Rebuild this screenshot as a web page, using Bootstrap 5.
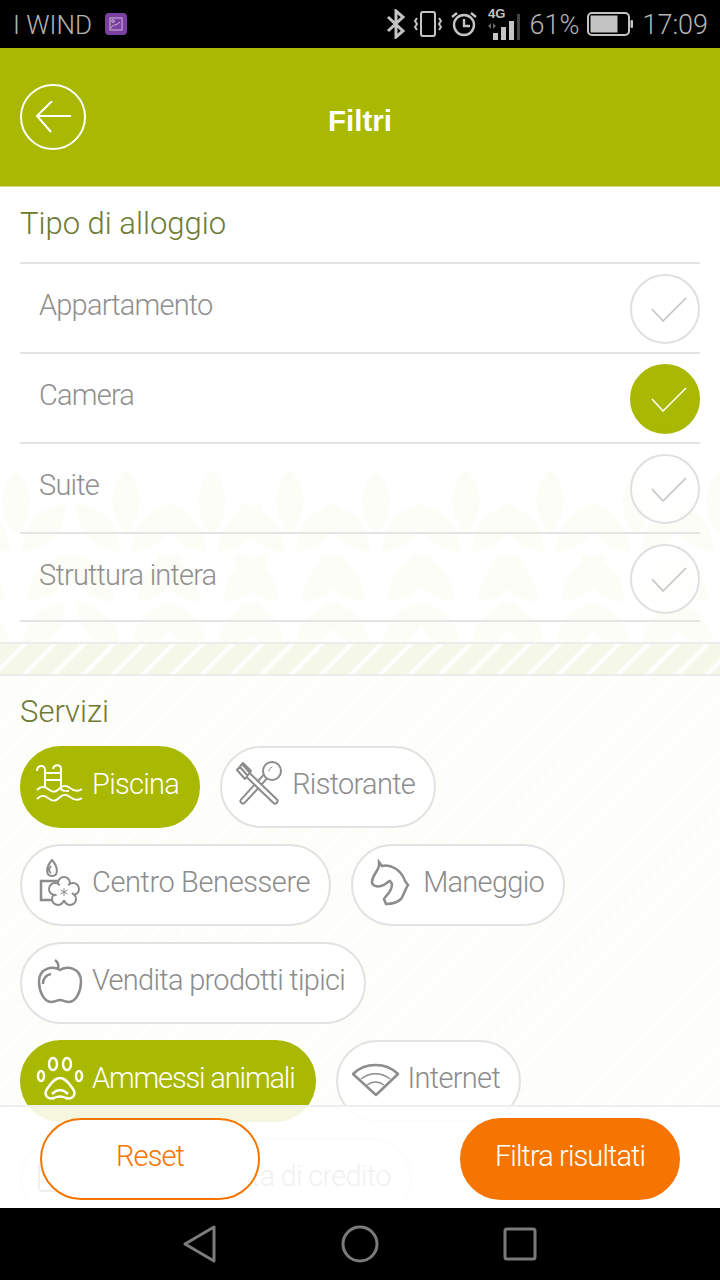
<!DOCTYPE html>
<html lang="it">
<head>
<meta charset="UTF-8">
<meta name="viewport" content="width=device-width, initial-scale=1.0">
<title>Filtri</title>
<link href="https://cdn.jsdelivr.net/npm/bootstrap@5.3.0/dist/css/bootstrap.min.css" rel="stylesheet">
<style>
body { background: #000; font-family: "Roboto", "Liberation Sans", sans-serif; font-weight: 300; }
.phone { width: 720px; height: 1280px; overflow: hidden; }
.status-bar { height: 48px; background: #000; color: #b4b4b4; font-size: 27px; padding: 0 12px 0 13px; flex: none; }
.status-bar span { line-height: 48px; padding-top: 2px; }
.status-bar .carrier { font-size: 26px; }
.app-head { height: 139px; background: #a9b800; border-bottom: 1px solid #d5db80; flex: none; padding: 36px 20px 0 20px; align-items: flex-start; }
.back-round { width: 66px; height: 66px; border: 2px solid #fff; border-radius: 50%; }
.app-title { font-family: "Liberation Sans", sans-serif; font-weight: 700; font-size: 29.500px; color: #fff; line-height: 1; top: 58px; }
.content-area { flex: 1 1 auto; min-height: 0; overflow: hidden; background: #fff; }
.wheat-bg { left: 0; top: 285px; width: 720px; height: 170px; z-index: 0; }
.type-box { height: 455px; flex: none; z-index: 1; padding: 0 20px; }
.sec-title { color: #6e7a34; font-size: 31px; line-height: 36px; margin: 0; }
.type-box .sec-title { padding: 19px 0 20px; }
.list-group-item.type-row { height: 90px; border: 0; border-top: 2px solid #e4e4e4; border-radius: 0; background: transparent; padding: 0 0 0 19px; color: #8f8f8f; font-size: 29px; letter-spacing: -.8px; }
.list-group-item.type-row:last-child { border-bottom: 2px solid #e4e4e4; padding-top: 2px; }
.row-label { padding-bottom: 4px; }
.tick-round { width: 70px; height: 70px; margin-top: 2px; border: 2px solid #e0e0e0; border-radius: 50%; background: rgba(255,255,255,.6); }
.tick-round svg { margin-left: 8px; }
.tick-round.on { background: #a9b800; border-color: #a9b800; }
.stripe-band { height: 34px; flex: none; border-top: 2px solid #ececec; border-bottom: 2px solid #ececec; background: repeating-linear-gradient(135deg, #f5f7e8 0 14px, #fff 17px 18px, #f5f7e8 21px); }
.serv-box { padding: 18px 20px 0; background: repeating-linear-gradient(135deg, #fdfdf9 0 14px, #fff 17px 18px, #fdfdf9 21px); flex: 1 1 auto; }
.serv-box .sec-title { margin-bottom: 16px; }
.chip-row { gap: 20px; }
.chip-item { height: 82px; border: 2px solid #e2e2e2; border-radius: 41px; background: #fff; color: #8c8c8c; font-size: 29px; letter-spacing: -.7px; padding: 0 19px 4px 14px; gap: 8px; white-space: nowrap; }
.chip-item.on { background: #a9b800; border-color: #a9b800; color: #fff; }
.chip-item.tight { letter-spacing: -1.150px; }
.chip-item.loose { letter-spacing: -.4px; }
.chip-item svg { width: 48px; height: 48px; flex: none; }
.foot-bar { left: 0; right: 0; bottom: 0; height: 103px; border-top: 2px solid #eee; background: rgba(255,255,255,.87); padding: 11px 40px 0; z-index: 2; }
.act-btn { width: 220px; height: 82px; border-radius: 41px; border: 2px solid #f57500; font-size: 29px; font-weight: 300; letter-spacing: -.9px; padding: 0 0 4px; }
.act-btn.plain { background: #fff; color: #f57500; }
.act-btn.solid { background: #f57500; color: #fff; }
.nav-bar { height: 72px; background: #000; flex: none; padding: 0 183px 0 183px; }
</style>
</head>
<body>
<div class="phone d-flex flex-column">
  <!-- status bar -->
  <div class="status-bar d-flex align-items-center justify-content-between">
    <div class="d-flex align-items-center gap-2">
      <span class="carrier">I WIND</span>
      <svg width="24" height="24" viewBox="0 0 24 24" class="ms-1"><rect x="1" y="1" width="22" height="22" rx="4" fill="#7b3fa0"/><rect x="6" y="6" width="12" height="12" fill="none" stroke="#cdb8dc" stroke-width="1"/><circle cx="9" cy="9" r="1.3" fill="none" stroke="#cdb8dc"/><path d="M7 16c2-4 5-2 9-6" fill="none" stroke="#cdb8dc"/></svg>
    </div>
    <div class="d-flex align-items-center">
      <svg width="20" height="30" viewBox="0 0 20 30" fill="none" stroke="#c4c4c4" stroke-width="3"><path d="M2 8l15 14-7 6V2l7 6L2 22"/></svg>
      <svg width="28" height="28" viewBox="0 0 28 28" fill="none" stroke="#c4c4c4" stroke-width="2" class="ms-2"><rect x="7" y="2" width="14" height="24" rx="2"/><path d="M3 8l-2 3 2 3-2 3 2 3M25 8l2 3-2 3 2 3-2 3"/></svg>
      <svg width="28" height="28" viewBox="0 0 28 28" fill="none" stroke="#c4c4c4" stroke-width="2.400" class="ms-2"><circle cx="14" cy="15" r="10"/><path d="M14 9v7h6M2 7l5-4M26 7l-5-4"/></svg>
      <svg width="40" height="36" viewBox="0 0 40 36" class="ms-1"><text x="6" y="12" fill="#c4c4c4" font-family="Liberation Sans" font-weight="700" font-size="13">4G</text><rect x="11" y="27" width="5" height="7" fill="#c4c4c4"/><rect x="19" y="21" width="5" height="13" fill="#c4c4c4"/><rect x="27" y="15" width="5" height="19" fill="#c4c4c4"/><rect x="35" y="8" width="3" height="26" fill="#444"/><path d="M9 17l-3 3 3 3zM11 17l3 3-3 3z" fill="#666"/></svg>
      <span class="ms-2">61%</span>
      <svg width="47" height="24" viewBox="0 0 47 24" class="ms-2"><rect x="1" y="1" width="41" height="22" rx="4" fill="none" stroke="#c4c4c4" stroke-width="2"/><rect x="3.500" y="3.500" width="27" height="17" fill="#c4c4c4"/><rect x="43.500" y="8" width="2.500" height="8" rx="1" fill="#c4c4c4"/></svg>
      <span class="ms-2">17:09</span>
    </div>
  </div>

  <!-- header -->
  <div class="app-head d-flex position-relative">
    <a class="back-round d-flex align-items-center justify-content-center" href="#" aria-label="Indietro">
      <svg width="35" height="32" viewBox="0 0 35 32" fill="none" stroke="#fff" stroke-width="2"><path d="M35 15H1M16 0L1 15l14 16"/></svg>
    </a>
    <div class="app-title position-absolute start-0 end-0 text-center">Filtri</div>
  </div>

  <div class="content-area position-relative d-flex flex-column">
    <svg class="wheat-bg position-absolute" viewBox="0 0 720 170">
      <defs>
        <path id="leaf" d="M0-32C18-14 18 14 0 32-18 14-18-14 0-32z"/>
        <g id="wheat" fill="#fdfdf8">
          <use href="#leaf" transform="translate(60 30)"/>
          <use href="#leaf" transform="translate(32 56) rotate(-42)"/>
          <use href="#leaf" transform="translate(88 56) rotate(42)"/>
          <use href="#leaf" transform="translate(26 106) rotate(-42)"/>
          <use href="#leaf" transform="translate(94 106) rotate(42)"/>
          <use href="#leaf" transform="translate(32 154) rotate(-42)"/>
          <use href="#leaf" transform="translate(88 154) rotate(42)"/>
        </g>
      </defs>
      <use href="#wheat" x="-44"/><use href="#wheat" x="66"/><use href="#wheat" x="152"/><use href="#wheat" x="230"/><use href="#wheat" x="316"/><use href="#wheat" x="406"/><use href="#wheat" x="490"/><use href="#wheat" x="576"/><use href="#wheat" x="660"/>
    </svg>

    <section class="type-box position-relative">
      <h2 class="sec-title fw-light">Tipo di alloggio</h2>
      <ul class="list-group">
        <li class="list-group-item type-row d-flex align-items-center justify-content-between"><span class="row-label">Appartamento</span>
          <span class="tick-round d-flex align-items-center justify-content-center"><svg width="36" height="25" viewBox="0 0 36 25" fill="none" stroke="#c2c2c2" stroke-width="1.500"><path d="M1 12l11 12L35 1"/></svg></span></li>
        <li class="list-group-item type-row d-flex align-items-center justify-content-between"><span class="row-label">Camera</span>
          <span class="tick-round on d-flex align-items-center justify-content-center"><svg width="36" height="25" viewBox="0 0 36 25" fill="none" stroke="#fff" stroke-width="1.500"><path d="M1 12l11 12L35 1"/></svg></span></li>
        <li class="list-group-item type-row d-flex align-items-center justify-content-between"><span class="row-label">Suite</span>
          <span class="tick-round d-flex align-items-center justify-content-center"><svg width="36" height="25" viewBox="0 0 36 25" fill="none" stroke="#c2c2c2" stroke-width="1.500"><path d="M1 12l11 12L35 1"/></svg></span></li>
        <li class="list-group-item type-row d-flex align-items-center justify-content-between"><span class="row-label">Struttura intera</span>
          <span class="tick-round d-flex align-items-center justify-content-center"><svg width="36" height="25" viewBox="0 0 36 25" fill="none" stroke="#c2c2c2" stroke-width="1.500"><path d="M1 12l11 12L35 1"/></svg></span></li>
      </ul>
    </section>

    <div class="stripe-band"></div>

    <section class="serv-box">
      <h2 class="sec-title fw-light">Servizi</h2>
      <div class="d-flex flex-column gap-3">
        <div class="chip-row d-flex">
          <div class="chip-item on d-flex align-items-center">
            <svg viewBox="0 0 48 48" fill="none" stroke="#fff" stroke-width="2"><path d="M1 10c0-6 8-7 8-1v17M17 8c1-5 8-5 8 0v19c0 3 3 3 8 3M9 12h16M9 19h16"/><path d="M1 29c4-4 7-4 11-1s7 4 11 0 7-4 11-1 8 4 12 1M1 38c4-4 7-4 11-1s7 4 11 0 7-4 11-1 8 4 12 1"/></svg>
            Piscina
          </div>
          <div class="chip-item d-flex align-items-center">
            <svg viewBox="0 0 48 48" fill="none" stroke-linecap="round">
              <path d="M29 16L7 40" stroke="#8c8c8c" stroke-width="7"/><path d="M29 16L7 40" stroke="#fff" stroke-width="3"/>
              <path d="M12 14l27 26" stroke="#8c8c8c" stroke-width="7"/><path d="M12 14l27 26" stroke="#fff" stroke-width="3"/>
              <path d="M1 9l6-7 8 8-6 8zM4 6l7 8M7 4l7 8" stroke="#8c8c8c" stroke-width="2" fill="#fff" stroke-linejoin="round"/>
              <ellipse cx="36" cy="10" rx="9" ry="9" fill="#fff" stroke="#8c8c8c" stroke-width="2"/><path d="M33 10c0-2 1-3 3-4" stroke="#8c8c8c"/>
            </svg>
            Ristorante
          </div>
        </div>
        <div class="chip-row d-flex">
          <div class="chip-item loose d-flex align-items-center">
            <svg viewBox="0 0 48 48" fill="none" stroke="#8c8c8c" stroke-width="2"><path d="M16 1c-7 8-6 16 0 16s7-8 0-16zM15 7c-3 3-2 6 0 7"/><path d="M24 22H5v19h11" stroke-width="2.500"/><g fill="#fff"><circle cx="28" cy="24" r="6"/><circle cx="37" cy="30" r="6"/><circle cx="34" cy="40" r="6"/><circle cx="22" cy="40" r="6"/><circle cx="19" cy="30" r="6"/></g><circle cx="28" cy="33" r="8" fill="#fff" stroke="none"/><path d="M28 29v8M24.500 31l7 4M31.500 31l-7 4" stroke-width="1"/></svg>
            Centro Benessere
          </div>
          <div class="chip-item d-flex align-items-center">
            <svg viewBox="0 0 48 48" fill="none" stroke="#8c8c8c" stroke-width="2.500"><path d="M12 3l3 4c8-2 19 3 23 15l3 4c-3 4-4 10-7 14-4 4-10 5-15 5l-2-5c3-5 8-7 8-15l-2-3c-3 1-5 4-9 5-4 1-9 0-9-4 0-6 6-11 7-16z"/></svg>
            Maneggio
          </div>
        </div>
        <div class="chip-row d-flex">
          <div class="chip-item d-flex align-items-center">
            <svg viewBox="0 0 48 48" fill="none" stroke="#8c8c8c" stroke-width="2.500"><path d="M24 13c7-4 21-3 21 12 0 9-5 20-12 20-4 0-6-2-9-2s-5 2-9 2C8 45 3 34 3 25c0-15 14-16 21-12zM22 12c1-4 0-7-3-9M7 27c0-6 3-9 8-10"/></svg>
            Vendita prodotti tipici
          </div>
        </div>
        <div class="chip-row d-flex">
          <div class="chip-item on tight d-flex align-items-center">
            <svg viewBox="0 0 48 48" fill="none" stroke="#fff" stroke-width="2.500"><ellipse cx="17" cy="9" rx="4" ry="6"/><ellipse cx="31" cy="9" rx="4" ry="6"/><ellipse cx="5" cy="21" rx="3" ry="5"/><ellipse cx="43" cy="21" rx="3" ry="5"/><path d="M24 23c-6 0-9 6-13 11-4 6 1 11 7 9 4-2 8-2 12 0 6 2 11-3 7-9-4-5-7-11-13-11zM16 39c5-5 11-5 16 0"/></svg>
            Ammessi animali
          </div>
          <div class="chip-item d-flex align-items-center">
            <svg viewBox="0 0 48 48" fill="none" stroke="#8c8c8c" stroke-width="2.500" stroke-linejoin="round"><path d="M1 19c12-12 33-12 45 0L24 40z"/><path d="M9 24c9-7 20-7 29 0M15 30c5-4 12-4 17 0" stroke-width="1.500"/></svg>
            Internet
          </div>
        </div>
        <div class="chip-row d-flex">
          <div class="chip-item d-flex align-items-center">
            <svg viewBox="0 0 48 48" fill="none" stroke="#8c8c8c" stroke-width="2"><rect x="3" y="10" width="42" height="28" rx="3"/><path d="M3 18h42"/></svg>
            Paga con carta di credito
          </div>
        </div>
      </div>
    </section>

    <div class="foot-bar position-absolute d-flex justify-content-between align-items-start">
      <button type="button" class="btn act-btn plain">Reset</button>
      <button type="button" class="btn act-btn solid">Filtra risultati</button>
    </div>
  </div>

  <!-- android nav -->
  <div class="nav-bar d-flex align-items-center justify-content-between">
    <svg width="34" height="38" viewBox="0 0 34 38" fill="none" stroke="#7b7b7b" stroke-width="3" stroke-linejoin="round"><path d="M31 2v34L2 19z"/></svg>
    <svg width="38" height="38" viewBox="0 0 38 38" fill="none" stroke="#7b7b7b" stroke-width="3"><circle cx="19" cy="19" r="17"/></svg>
    <svg width="34" height="34" viewBox="0 0 34 34" fill="none" stroke="#7b7b7b" stroke-width="3"><rect x="2" y="2" width="30" height="30" rx="2"/></svg>
  </div>
</div>
<script src="https://cdn.jsdelivr.net/npm/bootstrap@5.3.0/dist/js/bootstrap.bundle.min.js"></script>
</body>
</html>
